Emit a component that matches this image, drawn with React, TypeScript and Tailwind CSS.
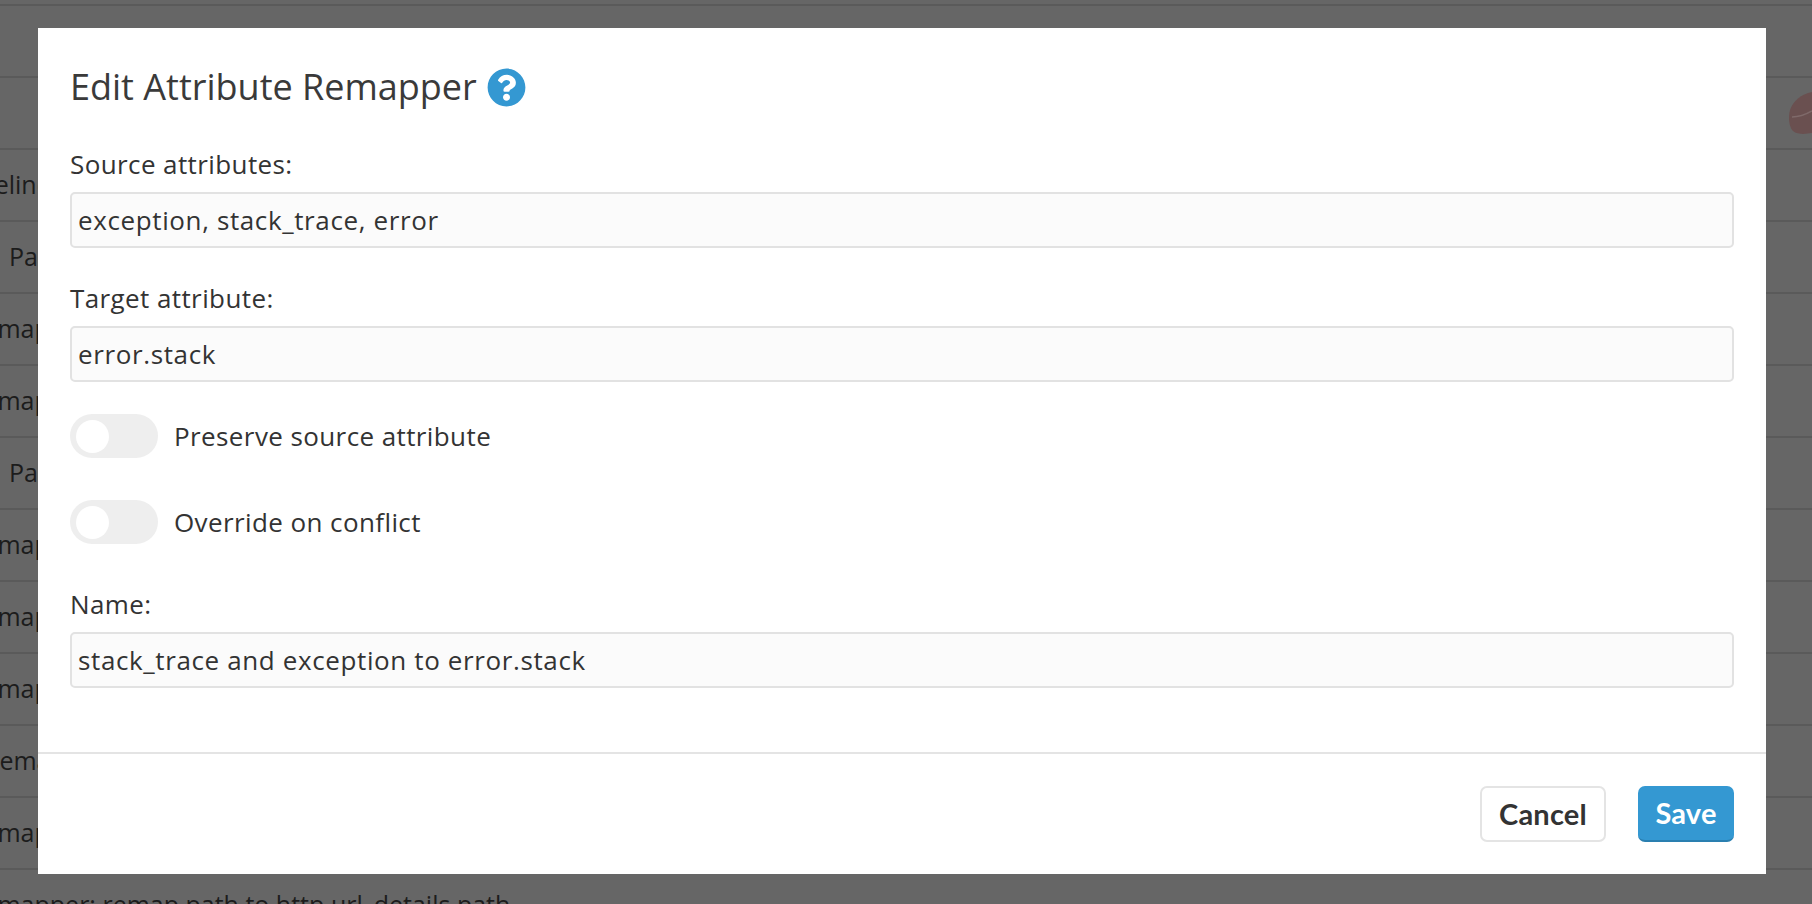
import { FaQuestionCircle } from "react-icons/fa";

const rows: { text: string; ml: string }[] = [
  { text: "", ml: "ml-0" },
  { text: "", ml: "ml-0" },
  { text: "Pipeline", ml: "-ml-[42px]" },
  { text: "Parser: parse", ml: "ml-[9px]" },
  { text: "Remapper: remap", ml: "-ml-[32px]" },
  { text: "Remapper: remap", ml: "-ml-[32px]" },
  { text: "Parser: parse", ml: "ml-[9px]" },
  { text: "Remapper: remap", ml: "-ml-[32px]" },
  { text: "Remapper: remap", ml: "-ml-[32px]" },
  { text: "Remapper: remap", ml: "-ml-[32px]" },
  { text: "Remapper: remap", ml: "-ml-[16px]" },
  { text: "Remapper: remap", ml: "-ml-[32px]" },
  { text: "Remapper: remap path to http.url_details.path", ml: "-ml-[32px]" },
];

function Field({ label, value, className }: { label: string; value: string; className: string }) {
  return (
    <div className={className}>
      <label className="block h-[34px] text-[26px] leading-[32px] tracking-[0.4px]">{label}</label>
      <input
        readOnly
        value={value}
        className="mt-[10px] block h-[56px] w-full rounded-[5px] border-2 border-[#e2e2e2] bg-[#fbfbfb] px-[6px] text-[26px] tracking-[0.62px] text-[#333] outline-none"
      />
    </div>
  );
}

function Toggle({ label, className }: { label: string; className: string }) {
  return (
    <div className={`flex items-center gap-[16px] ${className}`}>
      <div className="flex h-[44px] w-[88px] items-center rounded-full bg-[#eeeeee] pl-[6px]">
        <div className="h-[33px] w-[33px] rounded-full bg-white" />
      </div>
      <span className="text-[26px] leading-[34px] tracking-[0.4px]">{label}</span>
    </div>
  );
}

export default function App() {
  return (
    <div className="relative h-[904px] w-full overflow-hidden bg-[#666666] font-['Open_Sans',sans-serif] text-[#1c1c1c]">
      <div className="h-[6px] border-b-2 border-[#5a5a5a]" />
      {rows.map((r, i) => (
        <div
          key={i}
          className="relative flex h-[72px] items-center whitespace-nowrap border-b-2 border-[#5a5a5a] text-[25px]"
        >
          <span className={r.ml}>{r.text}</span>
          {i === 1 ? (
            <svg className="absolute right-0 top-[14px] h-[42px] w-[23px]" viewBox="0 0 23 42">
              <path d="M23 0C12 2 4 9 1 18c-2 7-1 17 3 21 5 4 13 3 19 2z" fill="#6a5050" />
              <path d="M3 25c6 0 13-2 20-6" stroke="#7f6a6a" strokeWidth="1.5" fill="none" />
            </svg>
          ) : null}
        </div>
      ))}

      <div className="absolute left-[38px] top-[28px] flex h-[846px] w-[1728px] flex-col bg-white text-[#333]">
        <div className="px-[32px] pt-[36px]">
          <div className="flex h-[46px] items-center gap-[10px]">
            <h1 className="text-[36px] font-normal leading-[46px] text-[#3a3a3a]">Edit Attribute Remapper</h1>
            <FaQuestionCircle className="h-[39px] w-[39px] text-[#3498d2]" />
          </div>
          <Field label="Source attributes:" value="exception, stack_trace, error" className="mt-[38px]" />
          <Field label="Target attribute:" value="error.stack" className="mt-[34px]" />
          <Toggle label="Preserve source attribute" className="mt-[32px]" />
          <Toggle label="Override on conflict" className="mt-[42px]" />
          <Field label="Name:" value="stack_trace and exception to error.stack" className="mt-[44px]" />
        </div>
        <div className="mt-[64px] border-t-2 border-[#e4e4e4]" />
        <div className="flex justify-end gap-[32px] px-[32px] pt-[32px]">
          <button className="h-[56px] w-[126px] rounded-[7px] border-2 border-[#e4e4e4] bg-white font-['Lato',sans-serif] text-[29px] font-bold tracking-[0.2px] text-[#333]">
            Cancel
          </button>
          <button className="h-[56px] w-[96px] rounded-[7px] border-b-2 border-[#2a7fb0] bg-[#3498d2] font-['Lato',sans-serif] text-[29px] font-bold tracking-[0.2px] text-white">
            Save
          </button>
        </div>
      </div>
    </div>
  );
}
